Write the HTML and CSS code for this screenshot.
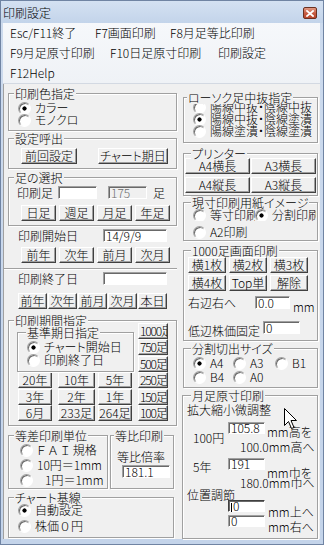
FILE: index.html
```
<!DOCTYPE html>
<html lang="ja">
<head>
<meta charset="utf-8">
<title>印刷設定</title>
<link rel="stylesheet" href="styles.css">
</head>
<body>
<div class="window">
  <div class="titlebar">
    <span class="title">印刷設定</span>
    <span class="close"><svg width="8" height="7" viewBox="0 0 8 7"><path d="M1 1L7 6M7 1L1 6" stroke="#fff" stroke-width="1.8" stroke-linecap="square"/></svg></span>
  </div>
  <div class="inner">
    <div class="menubar">
      <div class="mrow"><span class="mi m85">Esc/F11終了</span><span class="mi m75">F7画面印刷</span><span class="mi">F8月足等比印刷</span></div>
      <div class="mrow"><span class="mi m100">F9月足原寸印刷</span><span class="mi m108">F10日足原寸印刷</span><span class="mi">印刷設定</span></div>
      <div class="mrow"><span class="mi">F12Help</span></div>
    </div>
    <div class="client">
      <div class="colL">
        <div class="gb gL1">
          <span class="lg">印刷色指定</span>
          <div class="r on">カラー</div>
          <div class="r">モノクロ</div>
        </div>
        <div class="gb gL2">
          <span class="lg">設定呼出</span>
          <div class="row g21">
            <button class="btn w56">前回設定</button>
            <button class="btn w70">チャート期日</button>
          </div>
        </div>
        <div class="gb gL3">
          <span class="lg">足の選択</span>
          <div class="row ashi">
            <span class="lbl41">印刷足</span>
            <span class="tb w39"></span>
            <span class="tb dis w39 ml11">175</span>
            <span class="ml6">足</span>
          </div>
          <div class="row b4 ashib">
            <button class="btn w35">日足</button>
            <button class="btn w35">週足</button>
            <button class="btn w35">月足</button>
            <button class="btn w35">年足</button>
          </div>
        </div>
        <div class="row drow dstart"><span class="dlbl">印刷開始日</span><span class="tb w64">14/9/9</span></div>
        <div class="row b4 bstart">
          <button class="btn w35">前年</button>
          <button class="btn w35">次年</button>
          <button class="btn w35">前月</button>
          <button class="btn w35">次月</button>
        </div>
        <div class="sep"></div>
        <div class="row drow dend"><span class="dlbl">印刷終了日</span><span class="tb w64"></span></div>
        <div class="row b5">
          <button class="btn w29">前年</button>
          <button class="btn w29">次年</button>
          <button class="btn w29">前月</button>
          <button class="btn w29">次月</button>
          <button class="btn w29">本日</button>
        </div>
        <div class="gb gL4">
          <span class="lg">印刷期間指定</span>
          <div class="pgrid">
            <div class="gb sub">
              <span class="lg">基準期日指定</span>
              <div class="r on">チャート開始日</div>
              <div class="r">印刷終了日</div>
            </div>
            <button class="btn w30 lt">1000足</button>
            <button class="btn w30 lt">750足</button>
            <button class="btn w30 lt">500足</button>
            <button class="btn w34">20年</button>
            <button class="btn w37">10年</button>
            <button class="btn w34">5年</button>
            <button class="btn w30 lt">250足</button>
            <button class="btn w34">3年</button>
            <button class="btn w37">2年</button>
            <button class="btn w34">1年</button>
            <button class="btn w30 lt">150足</button>
            <button class="btn w34">6月</button>
            <button class="btn w37">233足</button>
            <button class="btn w34">264足</button>
            <button class="btn w30 lt">100足</button>
          </div>
        </div>
        <div class="row l5">
          <div class="gb gSa">
            <span class="lg">等差印刷単位</span>
            <div class="r"><span class="fai">ＦＡＩ</span>規格</div>
            <div class="r">10円＝1mm</div>
            <div class="r"><span class="ind">1円＝1mm</span></div>
          </div>
          <div class="gb gHi">
            <span class="lg">等比印刷</span>
            <div class="hlbl">等比倍率</div>
            <span class="tb w48 hin">181.1</span>
          </div>
        </div>
        <div class="gb gL6">
          <span class="lg">チャート基線</span>
          <div class="r on">自動設定</div>
          <div class="r">株価<span class="fw">０</span>円</div>
        </div>
      </div>
      <div class="colR">
        <div class="gb gR gR1">
          <span class="lg">ローソク足中抜指定</span>
          <div class="r">陽線中抜・陰線中抜</div>
          <div class="r on">陽線中抜・陰線塗潰</div>
          <div class="r">陽線塗潰・陰線塗潰</div>
        </div>
        <div class="gb gR gR2">
          <span class="lg">プリンター</span>
          <div class="pr">
            <button class="btn w65">A4横長</button>
            <button class="btn w65">A3横長</button>
            <button class="btn w65">A4縦長</button>
            <button class="btn w65">A3縦長</button>
          </div>
        </div>
        <div class="gb gR gR3">
          <span class="lg">現寸印刷用紙イメージ</span>
          <div class="row">
            <span class="r clip w62">等寸印刷</span>
            <span class="r on clip w61">分割印刷</span>
          </div>
          <div class="r">A2印刷</div>
        </div>
        <div class="gb gR gR4">
          <span class="lg">1000足画面印刷</span>
          <div class="sc">
            <button class="btn w38">横1枚</button>
            <button class="btn w38">横2枚</button>
            <button class="btn w38">横3枚</button>
            <button class="btn w38">横4枚</button>
            <button class="btn w38">Top単</button>
            <button class="btn w38">解除</button>
          </div>
          <div class="row migi">
            <span class="mlbl">右辺右へ</span>
            <span class="tb w35">0.0</span>
            <span class="mmu">mm</span>
          </div>
          <div class="row tei">
            <span class="tlbl">低辺株価固定</span>
            <span class="tb w37">0</span>
          </div>
        </div>
        <div class="gb gR gR5">
          <span class="lg">分割切出サイズ</span>
          <div class="row">
            <span class="r on w40">A4</span>
            <span class="r w42">A3</span>
            <span class="r">B1</span>
          </div>
          <div class="row">
            <span class="r w40">B4</span>
            <span class="r">A0</span>
          </div>
        </div>
        <div class="gb gR gR6">
          <span class="lg">月足原寸印刷</span>
          <div class="kaku">拡大縮小微調整</div>
          <div class="row frow fa">
            <span class="flbl fl1">100円</span>
            <span class="tb h12 w37">105.8</span>
            <span class="fu fu1">mm高を</span>
          </div>
          <div class="ftarget t1">100.0mm高へ</div>
          <div class="row frow fb">
            <span class="flbl fl2">5年</span>
            <span class="tb h12 w37">191</span>
            <span class="fu fu2">mm巾を</span>
          </div>
          <div class="ftarget t2">180.0mm巾へ</div>
          <div class="ichi">位置調節</div>
          <div class="row frow fc">
            <span class="tb h12 w37 focus"><span class="caret"></span>0</span>
            <span class="fu3">mm上へ</span>
          </div>
          <div class="row frow fd">
            <span class="tb h12 w37">0</span>
            <span class="fu3">mm右へ</span>
          </div>
        </div>
      </div>
    </div>
  </div>
  <svg class="cursor" width="13" height="21" viewBox="0 0 13 21"><path d="M0.5 0.5V17.5L4.5 13.5L7.5 20.5L10 19.5L7 12.5H12.5Z" fill="#fff" stroke="#000" stroke-width="1" stroke-linejoin="miter"/></svg>
</div>
</body>
</html>
```

FILE: styles.css
```
* { box-sizing: border-box; }
html, body { margin: 0; padding: 0; }
body {
  width: 324px;
  height: 545px;
  overflow: hidden;
  background: #c3d4eb;
  font-family: "Noto Sans CJK JP", "Noto Sans", sans-serif;
  font-size: 12px;
  font-weight: 300;
  line-height: 12px;
  color: #000;
  font-feature-settings: "palt";
}
.window {
  position: relative;
  width: 324px;
  height: 545px;
  border: 1px solid #7084a3;
  background: linear-gradient(#cddbee, #c4d4ea);
}
.titlebar {
  height: 22px;
  display: flex;
  align-items: center;
  justify-content: space-between;
  padding-left: 2px;
  background: linear-gradient(#d4e1f2, #c3d4ea);
}
.title { line-height: 14px; margin-top: 1px; }
.close {
  width: 14px;
  height: 12px;
  margin-right: 6px;
  margin-top: 2px;
  display: flex;
  align-items: center;
  justify-content: center;
  border: 1px solid #6b3020;
  border-radius: 2px;
  background: linear-gradient(#e19a84, #c65a40 55%, #b9482e);
}
.inner { margin: 0 3px 0 2px; }
.menubar {
  height: 61px;
  padding-left: 7px;
  background: linear-gradient(#f6f8fb, #eff2f6);
  border-bottom: 1px solid #d3d9e2;
}
.mrow { display: flex; height: 20px; line-height: 20px; white-space: nowrap; }
.mi { flex: none; }
.m85 { width: 85px; }
.m75 { width: 75px; }
.m100 { width: 100px; }
.m108 { width: 108px; }

.client {
  display: flex;
  align-items: flex-start;
  gap: 6px;
  height: 455px;
  padding: 0 2px 0 4px;
  background: #f0f0f0;
  border-left: 1px solid #a0a0a0;
}
.colL, .colR {
  display: flex;
  flex-direction: column;
  align-items: flex-start;
  flex: none;
}
.colL { width: 169px; }
.colR { width: 135px; }

.row { display: flex; flex: none; }

/* group box */
.gb {
  position: relative;
  flex: none;
  display: flex;
  flex-direction: column;
  align-items: flex-start;
  border: 1px solid #a0a0a0;
  box-shadow: inset 1px 1px 0 #fff, 1px 1px 0 #fff;
}
.lg {
  position: absolute;
  top: -7px;
  left: 5px;
  padding: 0 1px;
  line-height: 13px;
  background: #f0f0f0;
  white-space: nowrap;
}

/* radio */
.r {
  display: flex;
  align-items: center;
  height: 12px;
  white-space: nowrap;
  flex: none;
}
.r::before {
  content: "";
  flex: none;
  width: 11px;
  height: 11px;
  margin-right: 4px;
  border-radius: 50%;
  border: 1px solid;
  border-color: #a0a0a0 #fff #fff #a0a0a0;
  box-shadow: inset 1px 1px 0 #696969;
  background: #fff;
}
.r.on::before {
  background: radial-gradient(circle, #000 0 1.8px, #fff 2.4px);
}
.clip { overflow: hidden; }
.fai { letter-spacing: 3px; }
.fw { font-feature-settings: normal; }

/* button */
.btn {
  flex: none;
  height: 16px;
  margin: 0;
  padding: 0;
  font: inherit;
  line-height: 14px;
  color: #000;
  text-align: center;
  white-space: nowrap;
  overflow: hidden;
  background: #f0f0f0;
  border: 1px solid;
  border-color: #fff #404040 #404040 #fff;
  box-shadow: inset -1px -1px 0 #a0a0a0;
}
.btn.lt { text-align: left; padding-left: 1px; letter-spacing: -1.2px; }

/* text box */
.tb {
  display: block;
  flex: none;
  height: 13px;
  padding: 0 0 0 2px;
  line-height: 11px;
  white-space: nowrap;
  background: #fff;
  border: 1px solid;
  border-color: #a0a0a0 #fff #fff #a0a0a0;
  box-shadow: inset 1px 1px 0 #696969;
}
.tb.h12 { height: 12px; line-height: 10px; }
.tb.dis { background: #f0f0f0; color: #6d6d6d; }
.caret {
  display: inline-block;
  width: 1px;
  height: 9px;
  margin-right: 1px;
  vertical-align: -1px;
  background: #000;
}

.w29 { width: 29px; }
.w30 { width: 30px; }
.w34 { width: 34px; }
.w35 { width: 35px; }
.w37 { width: 37px; }
.w38 { width: 38px; }
.w39 { width: 39px; }
.w40 { width: 40px; }
.w42 { width: 42px; }
.w48 { width: 48px; }
.w56 { width: 56px; }
.w61 { width: 61px; }
.w62 { width: 62px; }
.w64 { width: 64px; }
.w65 { width: 65px; }
.w70 { width: 70px; }
.ml6 { margin-left: 6px; }
.ml11 { margin-left: 11px; }

/* left column */
.gL1 { width: 169px; height: 38px; margin-top: 9px; padding: 8px 0 0 9px; }
.gL2 { width: 169px; height: 31px; margin-top: 7px; padding: 9px 0 0 12px; }
.g21 { gap: 21px; }
.gL3 { width: 169px; height: 49px; margin-top: 8px; padding: 8px 0 0 8px; }
.ashi { align-items: center; height: 13px; }
.lbl41 { width: 41px; }
.b4 { gap: 3px; }
.ashib { margin: 6px 0 0 4px; }
.drow { align-items: center; height: 13px; }
.dlbl { width: 85px; }
.dstart { margin: 3px 0 0 10px; }
.bstart { margin: 5px 0 0 13px; }
.sep {
  flex: none;
  width: 173px;
  height: 2px;
  margin: 5px 0 0 -4px;
  border-top: 1px solid #a0a0a0;
  border-bottom: 1px solid #fff;
}
.dend { margin: 2px 0 0 10px; }
.b5 { gap: 1px; margin: 8px 0 0 10px; }

.gL4 { width: 169px; height: 106px; margin-top: 11px; padding: 2px 0 0 9px; }
.pgrid {
  display: grid;
  grid-template-columns: 40px 40px 40px 30px;
  grid-template-rows: repeat(6, 16px);
  row-gap: 0.4px;
}
.sub {
  grid-column: 1 / 4;
  grid-row: 1 / 4;
  align-self: start;
  width: 117px;
  height: 40px;
  margin: 9px 0 0 -1px;
  padding: 8px 0 0 9px;
  gap: 1px;
}
.sub .lg { left: 8px; }

.l5 { gap: 2px; margin-top: 9px; }
.gSa { width: 100px; height: 54px; padding: 8px 0 0 11px; gap: 3px; }
.ind { margin-left: 8px; }
.gHi { width: 64px; height: 54px; padding: 15px 0 0 6px; }
.gHi .lg { left: 3px; }
.hin { margin: 2px 0 0 5px; }
.gL6 { width: 166px; height: 41px; margin-top: 8px; padding: 6px 0 0 9px; gap: 4px; }

/* right column */
.gR { width: 135px; }
.gR .lg { left: 7px; }
.gR1 { height: 46px; margin-top: 13px; padding: 3px 0 0 9px; }
.gR1 .lg { left: 3px; }
.gR2 { height: 43px; margin-top: 10px; padding: 4px 0 0 1px; }
.pr {
  display: grid;
  grid-template-columns: 65px 65px;
  grid-template-rows: 16px 16px;
  column-gap: 1px;
  row-gap: 3px;
}
.gR3 { height: 39px; margin-top: 6px; padding: 6px 0 0 9px; gap: 5px; }
.gR4 { height: 91px; margin-top: 9px; padding: 6px 0 0 4px; }
.sc {
  display: grid;
  grid-template-columns: 38px 38px 38px;
  grid-template-rows: 16px 16px;
  column-gap: 3px;
  row-gap: 2px;
}
.migi { align-items: flex-start; margin-top: 5px; }
.mlbl { width: 67px; margin-top: 1px; }
.mmu { margin: 5px 0 0 3px; }
.tei { align-items: flex-start; margin-top: 8px; }
.tlbl { width: 75px; margin-top: 4px; }
.gR5 { height: 40px; margin-top: 7px; padding: 8px 0 0 9px; gap: 2px; }
.gR6 { width: 136px; height: 144px; margin: 7px 0 0 -1px; padding: 0; }
.gR6 .lg { left: 8px; }
.kaku { margin: 8px 0 0 4px; }
.frow { align-items: flex-start; }
.fa { margin-top: 6px; }
.flbl { width: 35px; margin-left: 10px; }
.fl1 { margin-top: 10px; }
.fu { margin-left: 2px; }
.fu1 { margin-top: 4px; }
.ftarget { margin-left: 57px; }
.t1 { margin-top: -3px; }
.fb { margin-top: 5px; }
.fl2 { margin-top: 3px; }
.fu2 { margin-top: 9px; }
.t2 { margin-top: -2px; }
.ichi { margin-left: 4px; }
.fc { margin: -1px 0 0 45px; }
.fd { margin: -3px 0 0 45px; }
.fu3 { margin: 6px 0 0 3px; }
.focus { border-color: #404040 #fff #fff #404040; }

.cursor { position: absolute; left: 283px; top: 407px; }
```
